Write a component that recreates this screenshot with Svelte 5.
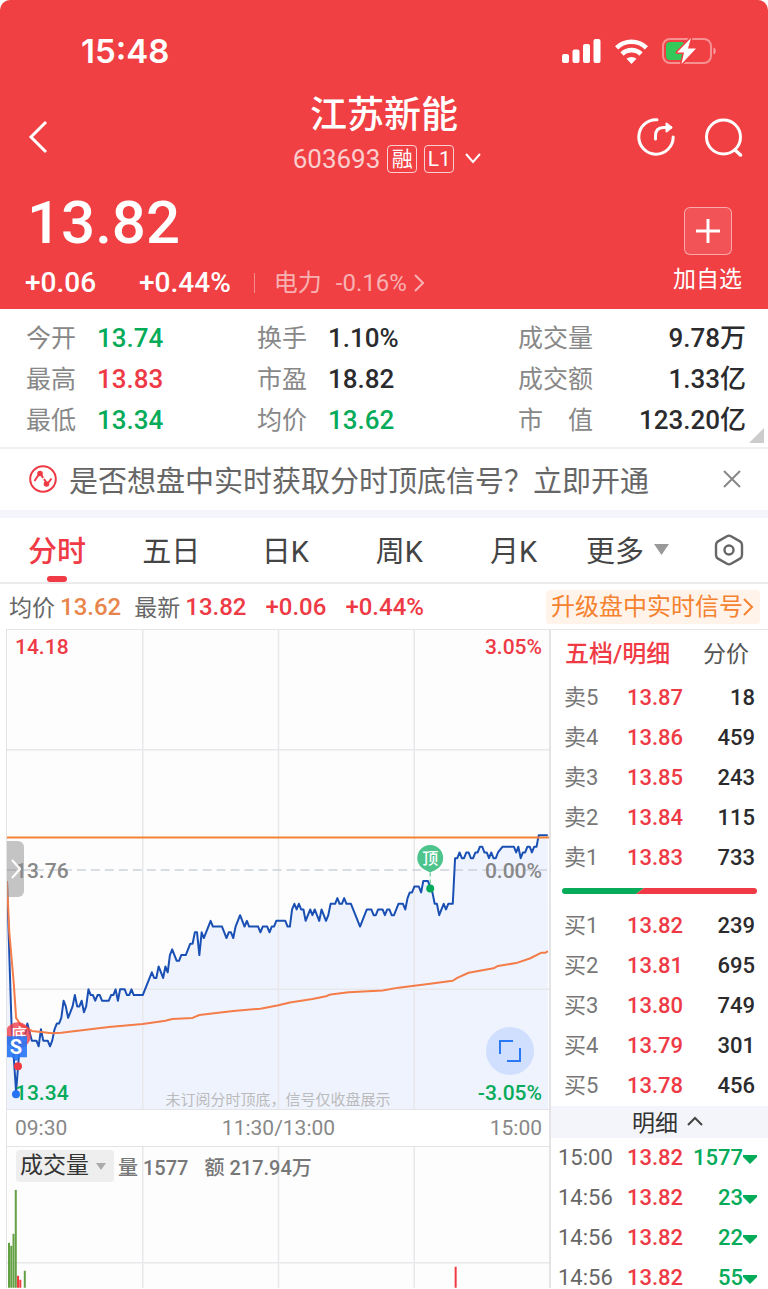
<script>
  let activeTab = "分时";
  let indicator = "成交量";
  let showNotice = true;

  const tabs = ["分时", "五日", "日K", "周K", "月K"];

  const stats = [
    { label: "今开", value: "13.74", tone: "down" },
    { label: "换手", value: "1.10%", tone: "" },
    { label: "成交量", value: "9.78万", tone: "" },
    { label: "最高", value: "13.83", tone: "up" },
    { label: "市盈", value: "18.82", tone: "" },
    { label: "成交额", value: "1.33亿", tone: "" },
    { label: "最低", value: "13.34", tone: "down" },
    { label: "均价", value: "13.62", tone: "down" },
    { label: "市　值", value: "123.20亿", tone: "" },
  ];

  const sells = [
    ["卖5", "13.87", 18],
    ["卖4", "13.86", 459],
    ["卖3", "13.85", 243],
    ["卖2", "13.84", 115],
    ["卖1", "13.83", 733],
  ];
  const buys = [
    ["买1", "13.82", 239],
    ["买2", "13.81", 695],
    ["买3", "13.80", 749],
    ["买4", "13.79", 301],
    ["买5", "13.78", 456],
  ];
  const trades = [
    ["15:00", "13.82", 1577],
    ["14:56", "13.82", 23],
    ["14:56", "13.82", 22],
    ["14:56", "13.82", 55],
  ];

  // [minute, ticks below the previous close]
  const price = [
    [0, 2], [2, 27], [4, 39], [5, 34], [6, 29], [8, 29], [9, 27], [11, 30], [13, 30], [14, 31],
    [15, 28], [16, 30], [18, 30], [19, 31], [20, 30], [21, 28], [22, 27], [23, 27], [24, 26],
    [25, 23], [26, 24], [27, 26], [28, 25], [29, 24], [30, 22], [31, 24], [32, 24], [33, 23],
    [34, 25], [35, 24], [36, 21], [37, 22], [38, 22], [39, 23], [40, 22], [41, 22], [42, 23],
    [45, 23], [46, 22], [47, 22], [48, 21], [49, 23], [50, 21], [52, 21], [53, 22], [54, 22],
    [55, 21], [56, 22], [60, 22], [64, 18], [65, 19], [66, 19], [67, 17], [69, 19], [70, 17],
    [71, 18], [72, 15], [73, 14], [75, 16], [76, 16], [77, 15], [79, 15], [81, 13], [82, 13],
    [83, 11], [84, 11], [85, 15], [86, 11], [87, 12], [90, 9], [91, 10], [95, 10], [97, 12],
    [98, 11], [99, 11], [100, 12], [101, 10], [103, 8], [105, 10], [106, 9], [107, 10],
    [111, 10], [112, 11], [113, 10], [115, 10], [116, 11], [117, 10], [118, 10], [119, 9],
    [123, 9], [124, 10], [125, 10], [126, 7], [127, 6], [128, 7], [129, 6], [130, 7], [131, 7],
    [132, 9], [134, 7], [135, 8], [136, 7], [138, 9], [139, 7], [141, 9], [142, 8], [143, 6],
    [145, 6], [146, 5], [147, 6], [148, 6], [149, 5], [150, 6], [152, 6], [156, 10], [159, 7],
    [161, 7], [162, 8], [163, 8], [164, 7], [166, 7], [167, 8], [168, 7], [169, 7], [170, 8],
    [171, 8], [173, 6], [175, 6], [176, 7], [177, 5], [178, 4], [179, 4], [180, 3], [182, 3],
    [183, 4], [184, 2], [186, 2], [187, 3], [188, 4], [189, 6], [190, 6], [191, 8], [193, 6],
    [194, 7], [195, 6], [197, 6], [198, -2], [199, -2], [200, -3], [201, -2], [202, -2],
    [203, -3], [204, -3], [205, -2], [206, -2], [207, -3], [208, -3], [209, -4], [210, -4],
    [211, -3], [212, -3], [213, -2], [214, -3], [215, -2], [216, -2], [217, -3], [219, -4],
    [224, -4], [225, -3], [226, -4], [227, -2], [228, -3], [229, -3], [230, -4], [231, -4],
    [232, -3], [233, -4], [234, -4], [235, -6], [239, -6],
  ];
  const average = [
    [0, 2], [1, 11], [3, 20], [4, 26], [6, 27.2], [11, 28.3], [20, 28.7], [24, 28.6], [35, 28.1],
    [45, 27.6], [60, 27.1], [70, 26.5], [73, 26.2], [82, 26], [85, 25.5], [100, 24.8],
    [112, 24.4], [120, 23.8], [125, 23.3], [135, 22.7], [141, 22.2], [143, 21.9], [151, 21.5],
    [166, 21.2], [173, 20.7], [187, 20], [197, 19.5], [199, 19], [204, 18.1], [215, 17.3],
    [217, 16.9], [225, 16.4], [231, 15.6], [236, 14.6], [238, 14.6], [239, 14.3],
  ];

  // [minute, height, direction]
  const volume = [
    [0, 45, "down"], [1, 42, "down"], [2, 54, "down"], [3, 98, "down"],
    [4, 12, "up"], [5, 8, "up"], [7, 17, "down"], [198, 21, "up"],
  ];

  const toX = (minute) => minute * 2.267;
  const toY = (ticks) => 240 + ticks * 5.714;
  const toPoints = (list) => list.map(([m, t]) => `${toX(m).toFixed(1)},${toY(t).toFixed(1)}`).join(" ");

  const priceLine = toPoints(price);
  const averageLine = toPoints(average);
</script>

<div class="page">
  <header>
    <div class="status">
      <span class="time">15:48</span>
      <div class="status-icons">
        <svg width="39" height="25" viewBox="0 0 39 25" fill="#fff">
          <rect x="0" y="15" width="7" height="9" rx="2" />
          <rect x="10.5" y="10.5" width="7" height="13.5" rx="2" />
          <rect x="21" y="5" width="7" height="19" rx="2" />
          <rect x="31.5" y="0" width="7" height="24" rx="2" />
        </svg>
        <svg width="33" height="25" viewBox="0 0 33 25" fill="none" stroke="#fff" stroke-width="4.6">
          <path d="M1.6 8.8a21.5 21.5 0 0 1 29.8 0" />
          <path d="M7 15a13.5 13.5 0 0 1 19 0" />
          <path d="M16.5 25l-5-5.2a7.500 7.500 0 0 1 10 0z" fill="#fff" stroke="none" />
        </svg>
        <svg width="55" height="28" viewBox="0 0 55 28">
          <rect x="1" y="2" width="48" height="24" rx="7" fill="none" stroke="#fff" stroke-opacity=".42" stroke-width="2" />
          <path d="M51.5 10.5c3 1 3 6 0 7z" fill="#fff" opacity=".5" />
          <rect x="4" y="5" width="19" height="18" rx="4" fill="#34c759" />
          <path d="M29 1L15 15.5h7L19.5 27 34 11.5h-8z" fill="#fff" stroke="#f04043" stroke-width="3" stroke-linejoin="round" />
          <path d="M29 1L15 15.5h7L19.5 27 34 11.5h-8z" fill="#fff" />
        </svg>
      </div>
    </div>

    <nav>
      <button class="back" aria-label="返回">
        <svg width="20" height="34" viewBox="0 0 20 34" fill="none" stroke="#fff" stroke-width="3">
          <path d="M18 2L3 17l15 15" />
        </svg>
      </button>
      <div class="title">
        <h1>江苏新能</h1>
        <button class="code">
          <span>603693</span>
          <span class="tag">融</span>
          <span class="tag">L1</span>
          <svg width="16" height="12" viewBox="0 0 16 12" fill="none" stroke="#fff" stroke-width="2">
            <path d="M1 1l7 8 7-8" />
          </svg>
        </button>
      </div>
      <div class="actions">
        <button aria-label="分享">
          <svg width="40" height="40" viewBox="0 0 40 40" fill="none" stroke="#fff" stroke-width="3" stroke-linecap="round">
            <path d="M21 2.8A17.2 17.2 0 1 0 37.2 20" />
            <path d="M19.5 22v-3c0-5.5 3-8.500 8-8.500h7" />
            <path d="M30.500 6.500l5 4-5 4z" fill="#fff" stroke-width="2" stroke-linejoin="round" />
          </svg>
        </button>
        <button aria-label="搜索">
          <svg width="41" height="40" viewBox="0 0 41 40" fill="none" stroke="#fff" stroke-width="3" stroke-linecap="round">
            <circle cx="20.5" cy="20" r="17" />
            <path d="M32 33l5.500 5" stroke-width="3.5" />
          </svg>
        </button>
      </div>
    </nav>

    <div class="quote">
      <div>
        <div class="price">13.82</div>
        <div class="change">
          <span>+0.06</span>
          <span>+0.44%</span>
          <a class="sector" href="#sector">
            <span>电力</span>
            <span>-0.16%</span>
            <svg width="10" height="18" viewBox="0 0 10 18" fill="none" stroke="currentColor" stroke-width="2">
              <path d="M1 1l8 8-8 8" />
            </svg>
          </a>
        </div>
      </div>
      <button class="add">
        <span class="plus">
          <svg width="24" height="24" viewBox="0 0 24 24" stroke="#fff" stroke-width="3">
            <path d="M12 0v24M0 12h24" />
          </svg>
        </span>
        加自选
      </button>
    </div>
  </header>

  <dl class="stats">
    {#each stats as stat}
      <div class="stat">
        <dt>{stat.label}</dt>
        <dd class={stat.tone}>{stat.value}</dd>
      </div>
    {/each}
    <span class="corner"></span>
  </dl>

  {#if showNotice}
    <div class="notice">
      <svg width="28" height="28" viewBox="0 0 28 28" fill="none" stroke="#ee3a45" stroke-width="2">
        <circle cx="14" cy="14" r="12.8" />
        <path d="M5.5 16l4-6M12.500 10l1.500 3M15 14l2 3M19.500 17.500l3-4" />
        <circle cx="11" cy="8.5" r="2.8" fill="#ee3a45" stroke="none" />
        <circle cx="17.5" cy="19" r="2.8" fill="#ee3a45" stroke="none" />
      </svg>
      <a href="#signal">是否想盘中实时获取分时顶底信号？立即开通</a>
      <button aria-label="关闭" on:click={() => (showNotice = false)}>
        <svg width="18" height="18" viewBox="0 0 18 18" stroke="#888" stroke-width="2">
          <path d="M1 1l16 16M17 1L1 17" />
        </svg>
      </button>
    </div>
  {/if}

  <div class="tabs">
    {#each tabs as tab}
      <button class="tab" class:active={tab === activeTab} on:click={() => (activeTab = tab)}>{tab}</button>
    {/each}
    <button class="tab more">
      更多
      <svg width="15" height="12" viewBox="0 0 15 12" fill="#999"><path d="M0 1h15L7.500 12z" /></svg>
    </button>
    <button class="settings" aria-label="设置">
      <svg width="30" height="32" viewBox="0 0 30 32" fill="none" stroke="#666" stroke-width="2.4">
        <path d="M13 2.2q2-1.2 4 0l9 5.200q2 1.200 2 3.500v10.200q0 2.300-2 3.500l-9 5.200q-2 1.200-4 0l-9-5.200q-2-1.200-2-3.500V10.900q0-2.300 2-3.500z" />
        <circle cx="15" cy="16" r="4.5" />
      </svg>
    </button>
  </div>

  <div class="latest">
    <span class="name">均价</span>
    <span class="avg">13.62</span>
    <span class="name second">最新</span>
    <span class="up">13.82</span>
    <span class="up wide">+0.06</span>
    <span class="up wide">+0.44%</span>
    <a class="upgrade" href="#upgrade">
      升级盘中实时信号
      <svg width="11" height="20" viewBox="0 0 11 20" fill="none" stroke="currentColor" stroke-width="2">
        <path d="M1 2l8 8-8 8" />
      </svg>
    </a>
  </div>

  <main>
    <section class="charts">
      <div class="chart">
        <svg class="plot" viewBox="0 0 543 480" fill="none">
          <polygon points={`0,480 ${priceLine} 542,480`} fill="#eff3fe" />
          <path d="M136 0v480M272 0v480M408 0v480M0 120h543M0 360h543" stroke="#e8e8ea" stroke-width="1.5" />
          <path d="M0 240.5h543" stroke="#cbd2dc" stroke-width="1.5" stroke-dasharray="9 5" />
          <polyline points={priceLine} stroke="#1a50b4" stroke-width="2" stroke-linejoin="round" />
          <polyline points={averageLine} stroke="#f47c48" stroke-width="2" stroke-linejoin="round" />
          <path d="M0 208h543" stroke="#f5822f" stroke-width="2" />

          <path d="M424 243v14" stroke="#4cc48c" stroke-dasharray="4 3" />
          <path d="M424 243l-6-3a13 13 0 1 1 12 0z" fill="#4cc48c" />
          <circle cx="424" cy="259" r="4" fill="#06ab5a" />
          <text x="424" y="234" class="pin">顶</text>

          <circle cx="11" cy="406" r="13" fill="#ee3a45" opacity=".78" />
          <text x="12" y="411" class="pin">底</text>
          <path d="M0 407h20v21h-7l-4 4-4-4H0z" fill="#2673f5" opacity=".9" />
          <text x="9" y="425" class="pin letter">S</text>
          <circle cx="11" cy="437" r="4" fill="#ee3a45" />
          <circle cx="9" cy="465" r="4" fill="#2673f5" />
        </svg>
        <span class="mark top left up">14.18</span>
        <span class="mark top right up">3.05%</span>
        <span class="mark middle left">13.76</span>
        <span class="mark middle right">0.00%</span>
        <span class="mark bottom left down">13.34</span>
        <span class="mark bottom right down">-3.05%</span>
        <span class="hint">未订阅分时顶底，信号仅收盘展示</span>
        <button class="drawer" aria-label="展开">
          <svg width="10" height="20" viewBox="0 0 10 20" fill="none" stroke="#fff" stroke-width="2">
            <path d="M1 1l8 9-8 9" />
          </svg>
        </button>
        <button class="expand" aria-label="全屏">
          <svg width="22" height="22" viewBox="0 0 22 22" fill="none" stroke="#2a78f6" stroke-width="2">
            <path d="M1 14V1h13M21 8v13H8" />
          </svg>
        </button>
      </div>

      <div class="times">
        <span>09:30</span>
        <span>11:30/13:00</span>
        <span>15:00</span>
      </div>

      <div class="chart volume">
        <svg class="plot" viewBox="0 0 543 141">
          <path d="M136 0v141M272 0v141M408 0v141M0 116h543" stroke="#e8e8ea" stroke-width="1.5" />
          {#each volume as [minute, height, tone]}
            <rect x={1 + minute * 2.26} y={141 - height} width="2" {height} fill={tone === "up" ? "#f03a40" : "#63a043"} />
          {/each}
        </svg>
        <div class="legend">
          <label class="picker">
            <select bind:value={indicator} aria-label="指标">
              <option>成交量</option>
              <option>MACD</option>
            </select>
            <svg width="10" height="7" viewBox="0 0 10 7" fill="#aaa"><path d="M0 0h10L5 7z" /></svg>
          </label>
          <span>量 1577</span>
          <span class="turnover">额 217.94万</span>
        </div>
      </div>
    </section>

    <aside>
      <div class="book-tabs">
        <button class="current">五档/明细</button>
        <button>分价</button>
      </div>
      <table>
        <tbody>
          {#each sells as [name, cost, amount]}
            <tr><th scope="row">{name}</th><td class="up">{cost}</td><td class="amount">{amount}</td></tr>
          {/each}
        </tbody>
      </table>
      <div class="ratio">
        <svg width="100%" height="6" viewBox="0 0 195 6" preserveAspectRatio="none">
          <path d="M0 0h82l-8 6H0z" fill="#06ab5a" />
          <path d="M82 0h113v6H74z" fill="#f03a45" />
        </svg>
      </div>
      <table>
        <tbody>
          {#each buys as [name, cost, amount]}
            <tr><th scope="row">{name}</th><td class="up">{cost}</td><td class="amount">{amount}</td></tr>
          {/each}
        </tbody>
      </table>
      <button class="detail">
        明细
        <svg width="16" height="10" viewBox="0 0 16 10" fill="none" stroke="#444" stroke-width="2">
          <path d="M1 9l7-7 7 7" />
        </svg>
      </button>
      <table class="trades">
        <tbody>
          {#each trades as [time, cost, amount]}
            <tr>
              <th scope="row">{time}</th>
              <td class="up">{cost}</td>
              <td class="amount down">
                {amount}<svg width="14" height="9" viewBox="0 0 14 9" fill="#06ab5a"><path d="M0 0h14v2L7 9 0 2z" /></svg>
              </td>
            </tr>
          {/each}
        </tbody>
      </table>
    </aside>
  </main>
</div>

<style>
  :global(body) {
    background: #fff;
  }

  .page {
    height: 100vh;
    overflow-y: auto;
    scrollbar-width: none;
    font-family: Roboto, "Noto Sans CJK SC", sans-serif;
    color: #2b2b2e;
    background: #fff;
  }

  .page * {
    box-sizing: border-box;
  }

  button,
  select {
    margin: 0;
    padding: 0;
    border: 0;
    background: none;
    color: inherit;
    font: inherit;
    cursor: pointer;
  }

  a {
    color: inherit;
    text-decoration: none;
  }

  svg {
    display: block;
    flex: none;
  }

  .up {
    color: #ee3a45;
  }

  .down {
    color: #06ab5a;
  }

  header {
    background: #f04043;
    color: #fff;
    border-radius: 10px 10px 0 0;
  }

  .status {
    display: flex;
    justify-content: space-between;
    align-items: center;
    padding: 10px 51px 0 81px;
    height: 92px;
  }

  .time {
    font-family: Inter, sans-serif;
    font-size: 33px;
    font-weight: 600;
  }

  .status-icons {
    display: flex;
    align-items: center;
    gap: 14px;
  }

  nav {
    display: grid;
    grid-template-columns: 1fr auto 1fr;
    align-items: center;
    padding: 0 24px;
  }

  .back {
    justify-self: start;
    padding-left: 4px;
  }

  .title {
    display: flex;
    flex-direction: column;
    align-items: center;
    padding-top: 3px;
  }

  h1 {
    margin: 0;
    font-size: 37px;
    font-weight: 500;
    line-height: 42px;
  }

  .code {
    display: flex;
    align-items: center;
    gap: 7px;
    padding-left: 6px;
    height: 44px;
    font-size: 26px;
    color: rgba(255, 255, 255, 0.75);
  }

  .tag {
    width: 30px;
    height: 28px;
    border: 1px solid rgba(255, 255, 255, 0.75);
    border-radius: 4px;
    color: #fff;
    font-size: 21px;
    line-height: 26px;
    text-align: center;
  }

  .code svg {
    margin-left: 4px;
  }

  .actions {
    display: flex;
    justify-content: flex-end;
    gap: 27px;
  }

  .quote {
    display: flex;
    justify-content: space-between;
    padding: 1px 26px 7px 25px;
  }

  .price {
    padding-left: 2px;
    font-size: 60px;
    font-weight: 500;
    line-height: 82px;
  }

  .change {
    display: flex;
    align-items: center;
    gap: 43px;
    font-size: 28px;
    font-weight: 500;
    line-height: 38px;
  }

  .sector {
    display: flex;
    align-items: center;
    gap: 14px;
    margin-left: -20px;
    padding-left: 19px;
    border-left: 1px solid rgba(255, 255, 255, 0.4);
    color: rgba(255, 255, 255, 0.6);
    font-size: 24px;
    font-weight: 400;
    line-height: 20px;
  }

  .sector svg {
    margin-left: -7px;
  }

  .add {
    display: flex;
    flex-direction: column;
    align-items: center;
    gap: 9px;
    padding-top: 25px;
    font-size: 23px;
    line-height: 32px;
  }

  .plus {
    display: grid;
    place-items: center;
    width: 48px;
    height: 48px;
    border: 1px solid rgba(255, 255, 255, 0.5);
    border-radius: 6px;
    background: rgba(255, 255, 255, 0.1);
  }

  .stats {
    position: relative;
    display: grid;
    grid-template-columns: 231fr 261fr 228fr;
    margin: 0;
    padding: 9px 22px 6px 26px;
    border-bottom: 2px solid #f0f0f2;
    line-height: 41px;
  }

  .stat {
    display: flex;
  }

  .stat:nth-child(3n) {
    justify-content: space-between;
  }

  dt {
    min-width: 71px;
    color: #888;
    font-size: 25px;
  }

  dd {
    margin: 0;
    font-size: 26px;
    font-weight: 500;
  }

  .corner {
    position: absolute;
    right: 4px;
    bottom: 4px;
    border-left: 15px solid transparent;
    border-bottom: 15px solid #ccc;
  }

  .notice {
    display: flex;
    align-items: center;
    padding: 0 27px 2px 29px;
    height: 69px;
    border-bottom: 8px solid #f4f5fa;
  }

  .notice a {
    flex: 1;
    margin-left: 12px;
    color: #666;
    font-size: 29px;
    white-space: nowrap;
  }

  .tabs {
    display: flex;
    height: 66px;
    border-bottom: 2px solid #ebebed;
  }

  .tab {
    position: relative;
    flex: 115;
    padding-bottom: 3px;
    color: #444;
    font-size: 29px;
  }

  .active {
    color: #f03a45;
    font-weight: 500;
  }

  .active::after {
    content: "";
    position: absolute;
    left: calc(50% - 10px);
    bottom: 0;
    width: 20px;
    height: 6px;
    border-radius: 3px;
    background: #f03a45;
  }

  .more {
    display: flex;
    align-items: center;
    justify-content: center;
    gap: 10px;
    padding-right: 6px;
  }

  .settings {
    display: grid;
    flex: 78;
    place-items: center;
  }

  .latest {
    display: flex;
    align-items: center;
    padding: 0 8px 0 9px;
    height: 45px;
    font-size: 24px;
    font-weight: 500;
  }

  .name {
    margin-right: 5px;
    padding-bottom: 2px;
    color: #666;
    font-size: 23px;
    font-weight: 400;
  }

  .second {
    margin-left: 13px;
  }

  .avg {
    color: #e8854c;
  }

  .wide {
    margin-left: 19px;
  }

  .upgrade {
    display: flex;
    align-items: center;
    margin-left: auto;
    padding: 0 6px 0 5px;
    border-radius: 4px;
    background: #fff3ea;
    color: #f5822f;
    font-weight: 400;
    line-height: 34px;
  }

  main {
    display: flex;
    align-items: flex-start;
  }

  .charts {
    flex: 1;
    margin-left: 6px;
    border: solid #e4e4e6;
    border-width: 1px 2px 0 1px;
  }

  .chart {
    position: relative;
  }

  .plot {
    width: 100%;
    height: auto;
    background: #fdfdfe;
  }

  .pin {
    fill: #fff;
    font-size: 16px;
    font-weight: 500;
    text-anchor: middle;
  }

  .letter {
    font-size: 20px;
    font-weight: 700;
  }

  .mark {
    position: absolute;
    color: #888;
    font-size: 21px;
    font-weight: 500;
    line-height: 32px;
  }

  .up.mark {
    color: #ee3a45;
  }

  .down.mark {
    color: #06ab5a;
  }

  .left {
    left: 8px;
  }

  .right {
    right: 7px;
  }

  .top {
    top: 1px;
  }

  .middle {
    top: calc(50% - 15px);
  }

  .bottom {
    bottom: 0;
  }

  .hint {
    position: absolute;
    bottom: 0;
    left: 0;
    right: 0;
    color: #bbb;
    font-size: 15px;
    line-height: 18px;
    text-align: center;
  }

  .drawer {
    position: absolute;
    top: 44%;
    left: 0;
    display: grid;
    place-items: center end;
    padding-right: 3px;
    width: 17px;
    height: 56px;
    border-radius: 0 6px 6px 0;
    background: rgba(140, 140, 140, 0.5);
  }

  .expand {
    position: absolute;
    right: 15px;
    bottom: 34px;
    display: grid;
    place-items: center;
    width: 48px;
    height: 48px;
    border-radius: 50%;
    background: #d0dffd;
  }

  .times {
    display: flex;
    justify-content: space-between;
    padding: 0 7px 0 8px;
    border: solid #e4e4e6;
    border-width: 1px 0;
    color: #888;
    font-size: 21px;
    line-height: 36px;
  }

  .legend {
    position: absolute;
    top: 3px;
    left: 9px;
    display: flex;
    align-items: center;
    gap: 4px;
    color: #777;
    font-size: 20px;
    font-weight: 500;
  }

  .turnover {
    margin-left: 12px;
  }

  .picker {
    display: flex;
    align-items: center;
    gap: 5px;
    padding: 0 8px 0 4px;
    height: 32px;
    border-radius: 4px;
    background: #eee;
  }

  select {
    appearance: none;
    width: 71px;
    color: #333;
    font-size: 23px;
    font-weight: 400;
    line-height: 32px;
  }

  aside {
    flex: none;
    width: 217px;
    border-top: 1px solid #e4e4e6;
  }

  .book-tabs {
    display: flex;
    justify-content: space-between;
    padding: 0 19px 5px 14px;
    height: 48px;
    color: #555;
    font-size: 23px;
  }

  .current {
    color: #f03a45;
    font-size: 24px;
    font-weight: 500;
  }

  table {
    width: 100%;
    table-layout: fixed;
    border-collapse: collapse;
    font-size: 22px;
    line-height: 24px;
  }

  th {
    width: 76px;
    padding: 8px 0 8px 13px;
    color: #777;
    font-weight: 400;
    text-align: left;
  }

  td {
    padding: 8px 0;
    width: 60px;
    font-weight: 500;
  }

  td.amount {
    width: auto;
    padding-right: 13px;
    text-align: right;
  }

  .trades th {
    padding-left: 7px;
    color: #666;
  }

  td.amount.down {
    padding-right: 11px;
    white-space: nowrap;
  }

  .trades .amount svg {
    display: inline-block;
    vertical-align: 1px;
  }

  .ratio {
    display: flex;
    align-items: center;
    padding: 0 11px 2px;
    height: 28px;
  }

  .ratio svg {
    flex: 1;
    border-radius: 3px;
  }

  .detail {
    display: flex;
    align-items: center;
    justify-content: center;
    gap: 9px;
    padding: 0 0 3px 16px;
    width: 100%;
    height: 32px;
    background: #f4f5fa;
    color: #333;
    font-size: 23px;
  }
</style>
